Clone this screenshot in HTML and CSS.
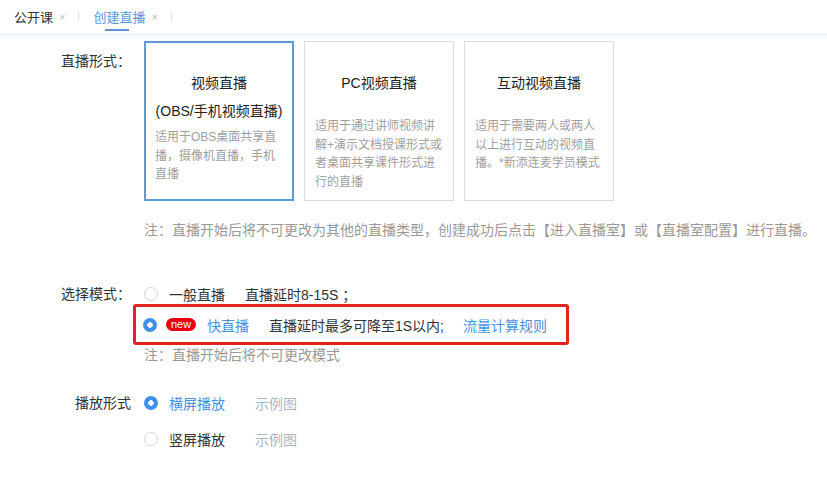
FILE: index.html
```html
<!DOCTYPE html>
<html lang="zh-CN">

<head>
    <meta charset="UTF-8">
    <meta name="viewport" content="width=device-width, initial-scale=1.0">
    <title>创建直播</title>
    <link rel="stylesheet" href="styles.css">
</head>

<body>
    <div class="tabs">
        <div class="tab">
            <span class="tab-name">公开课</span>
            <span class="tab-close">×</span>
        </div>
        <div class="tab active">
            <span class="tab-name">创建直播</span>
            <span class="tab-close">×</span>
        </div>
    </div>
    <div class="tabs-shadow"></div>

    <div class="form">
        <div class="row">
            <div class="label label-cards">直播形式：</div>
            <div class="cards">
                <div class="card active">
                    <div class="card-title">视频直播<br>(OBS/手机视频直播)</div>
                    <div class="card-desc no-gap">适用于OBS桌面共享直播，摄像机直播，手机直播</div>
                </div>
                <div class="card">
                    <div class="card-title">PC视频直播</div>
                    <div class="card-desc">适用于通过讲师视频讲解+演示文档授课形式或者桌面共享课件形式进行的直播</div>
                </div>
                <div class="card">
                    <div class="card-title">互动视频直播</div>
                    <div class="card-desc">适用于需要两人或两人以上进行互动的视频直播。*新添连麦学员模式</div>
                </div>
            </div>
        </div>

        <div class="note note-type">注：直播开始后将不可更改为其他的直播类型，创建成功后点击【进入直播室】或【直播室配置】进行直播。</div>

        <div class="row row-mode">
            <div class="label">选择模式：</div>
            <div class="options">
                <div class="option">
                    <span class="radio"></span>
                    <span class="option-name">一般直播</span>
                    <span class="option-info">直播延时8-15S ；</span>
                </div>
                <div class="option highlight">
                    <span class="radio checked"></span>
                    <span class="badge">new</span>
                    <span class="option-name blue">快直播</span>
                    <span class="option-info">直播延时最多可降至1S以内;</span>
                    <a class="link" href="#">流量计算规则</a>
                </div>
                <div class="note">注：直播开始后将不可更改模式</div>
            </div>
        </div>

        <div class="row row-play">
            <div class="label">播放形式</div>
            <div class="options play-options">
                <div class="option">
                    <span class="radio checked"></span>
                    <span class="option-name blue">横屏播放</span>
                    <a class="sample" href="#">示例图</a>
                </div>
                <div class="option">
                    <span class="radio"></span>
                    <span class="option-name">竖屏播放</span>
                    <a class="sample" href="#">示例图</a>
                </div>
            </div>
        </div>
    </div>
</body>

</html>
```

FILE: styles.css
```css
body {
    margin: 0;
    background: #fff;
    font-family: "Liberation Sans", "Noto Sans CJK SC", sans-serif;
    font-size: 14px;
    color: #333;
}

a {
    text-decoration: none;
}

/* tabs */
.tabs {
    display: flex;
    align-items: center;
    height: 33px;
    padding-left: 14px;
}

.tab {
    display: flex;
    align-items: center;
    height: 33px;
    padding-right: 14px;
    margin-right: 14px;
    position: relative;
    font-size: 13px;
    color: #333;
}

.tab::before {
    content: "";
    position: absolute;
    right: 0;
    top: 11px;
    width: 1px;
    height: 11px;
    background: #e4e4e4;
}

.tab-close {
    margin-left: 6px;
    font-size: 11px;
    color: #bbb;
}

.tab.active .tab-name {
    color: #5b98dc;
}

.tab.active::after {
    content: "";
    position: absolute;
    left: 12px;
    bottom: 2px;
    width: 24px;
    height: 2px;
    background: #5b93d6;
}

.tabs-shadow {
    height: 7px;
    background: linear-gradient(#eef4fa, #fbfdfe);
}

/* form */
.form {
    padding-top: 1px;
}

.row {
    display: flex;
}

.label {
    width: 131px;
    margin-right: 13px;
    text-align: right;
    line-height: 20px;
    flex-shrink: 0;
}

.label-cards {
    padding-top: 10px;
}

.cards {
    display: flex;
    gap: 10px;
}

.card {
    width: 150px;
    height: 160px;
    box-sizing: border-box;
    border: 1px solid #dcdcdc;
    padding: 27px 10px 0;
}

.card.active {
    border: 2px solid #5b9bd8;
    padding: 26px 9px 0;
}

.card-title {
    text-align: center;
    line-height: 28px;
    font-size: 14px;
    color: #222;
}

.card-desc {
    margin-top: 20px;
    font-size: 12px;
    line-height: 18.6px;
    color: #a0a0a0;
}

.card-desc.no-gap {
    margin-top: 3px;
}

.note {
    line-height: 20px;
    color: #999;
}

.note-type {
    margin: 19px 0 0 144px;
}

.row-mode {
    margin-top: 44px;
}

.option {
    display: flex;
    align-items: center;
    height: 20px;
}

.option.highlight {
    height: 35px;
    width: 423px;
    margin-left: -11px;
    padding-left: 7px;
    border: 3px solid #e3231e;
    border-radius: 3px;
}

.radio {
    width: 14px;
    height: 14px;
    box-sizing: border-box;
    border: 1px solid #d6d6d6;
    border-radius: 50%;
    margin-right: 11px;
    flex-shrink: 0;
}

.radio.checked {
    border: none;
    background: radial-gradient(circle, #fff 0 2.5px, #3f90ee 3px);
}

.highlight .radio {
    margin-right: 9px;
}

.badge {
    width: 30px;
    height: 13px;
    line-height: 13px;
    border-radius: 7px;
    background: #e60012;
    color: #fff;
    font-size: 11px;
    text-align: center;
    margin-right: 11px;
}

.option-name {
    margin-right: 20px;
}

.blue {
    color: #4a90e2;
}

.link {
    margin-left: 19px;
    color: #4a90e2;
}

.row-play {
    margin-top: 28px;
}

.play-options {
    display: flex;
    flex-direction: column;
    gap: 16px;
}

.play-options .option-name {
    margin-right: 30px;
}

.sample {
    color: #aab4c0;
}
```
